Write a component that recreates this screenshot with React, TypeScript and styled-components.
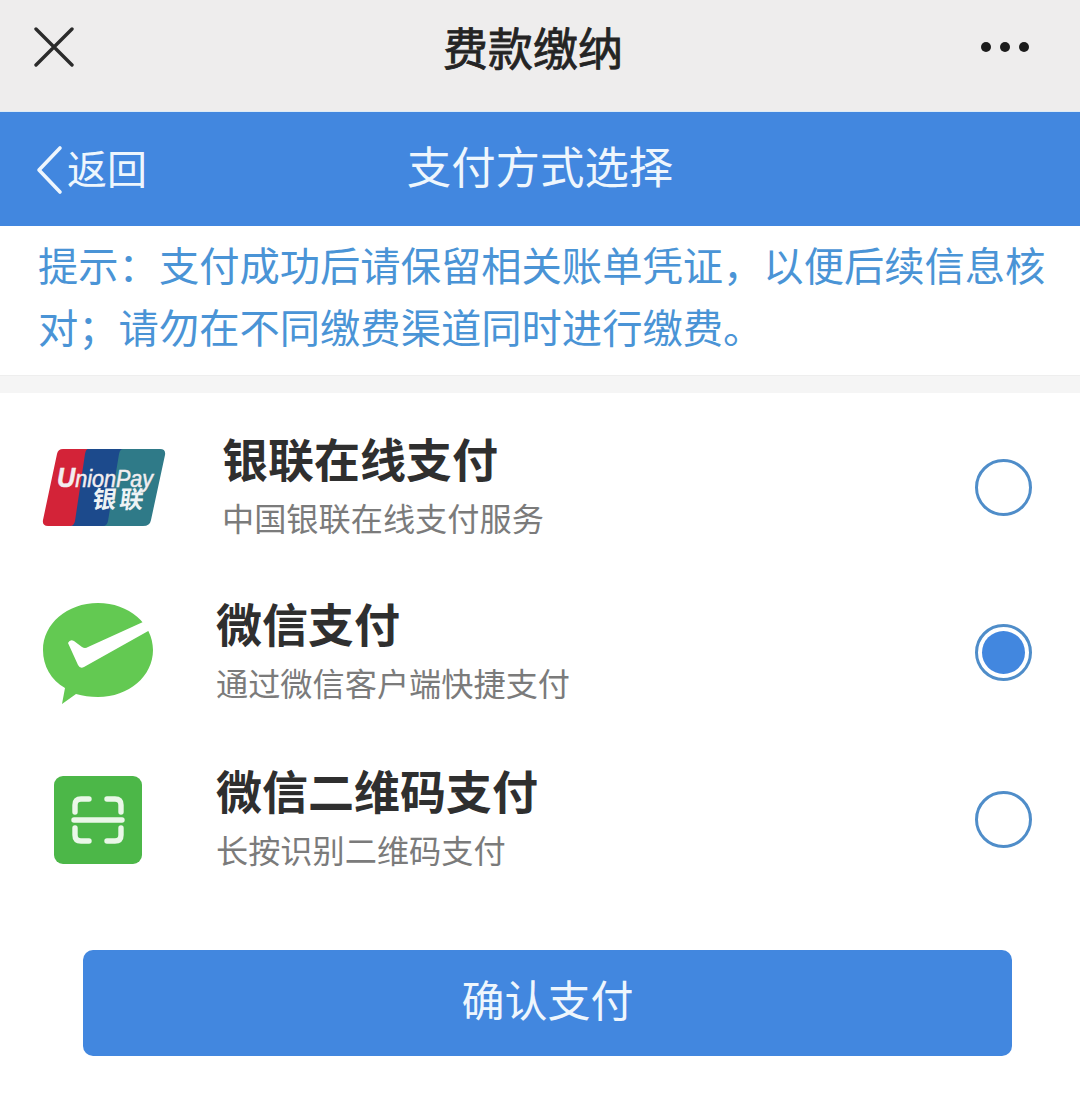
import React from 'react';
import { createGlobalStyle, styled } from 'styled-components';

const BLUE = '#4287df';

const GlobalStyle = createGlobalStyle`
  html, body {
    margin: 0;
    padding: 0;
    background: #fff;
    font-family: "Liberation Sans", "Noto Sans CJK SC", sans-serif;
  }
`;

interface IPayMethod {
  id: string;
  title: string;
  desc: string;
  icon: React.ReactNode;
  iconLeft: number;
  iconTop: number;
  textLeft: number;
  height: number;
  selected?: boolean;
}

function UnionPayLogo() {
  return (
    <svg width="124" height="80" viewBox="0 0 124 80">
      <path d="M21 1H50Q48 1 47 6L34 73Q33 78 29 78H6Q0 78 1 72L15 6Q16 1 21 1Z" fill="#d32338" />
      <path d="M46 1H84L66 78H28Q32 78 33 73L43 6Q44 1 46 1Z" fill="#1c4a8c" />
      <path d="M81 1H118Q124 1 123 7L109 72Q108 78 101 78H61Q65 78 66 73L77 6Q78 1 81 1Z" fill="#2f7a88" />
      <text x="15" y="39" fill="#f3eef0" stroke="#f3eef0" strokeWidth="0.5" fontFamily="'Liberation Sans'" fontStyle="italic" fontSize="23" textLength="96" lengthAdjust="spacingAndGlyphs">
        <tspan fontWeight="700" fontSize="27">U</tspan>nionPay
      </text>
      <text x="50" y="60" fill="#eef3f5" fontFamily="'Noto Sans CJK SC'" fontWeight="700" fontSize="24" textLength="51" transform="skewX(-8) translate(8 0)">
        银联
      </text>
    </svg>
  );
}

function WeChatPayLogo() {
  return (
    <svg width="112" height="102" viewBox="0 0 112 102">
      <path d="M56 1C87 1 111 22 111 48C111 74 87 95 56 95C48 95 41 94 34 92L20 102L23 86C9 78 1 64 1 48C1 22 25 1 56 1Z" fill="#63c952" />
      <path d="M26 41Q28 37 32 39L40 45Q43 47 46 45L101 20L108 28L42 65Q38 67 36 63Z" fill="#fff" />
    </svg>
  );
}

function ScanLogo() {
  return (
    <svg width="90" height="90" viewBox="0 0 90 90">
      <rect x="1" y="1" width="88" height="88" rx="9" fill="#4cb748" />
      <g fill="none" stroke="#eaf7e8" strokeWidth="5.4" strokeLinecap="round" strokeLinejoin="round">
        <path d="M22 37V30Q22 24 28 24H36" />
        <path d="M54 24H62Q68 24 68 30V37" />
        <path d="M22 53V60Q22 66 28 66H36" />
        <path d="M54 66H62Q68 66 68 60V53" />
        <path d="M21 45H69" />
      </g>
    </svg>
  );
}

const methods: IPayMethod[] = [
  { id: 'union', title: '银联在线支付', desc: '中国银联在线支付服务', icon: <UnionPayLogo />, iconLeft: 42, iconTop: 2, textLeft: 222, height: 164 },
  { id: 'wechat', title: '微信支付', desc: '通过微信客户端快捷支付', icon: <WeChatPayLogo />, iconLeft: 42, iconTop: 2, textLeft: 216, height: 166, selected: true },
  { id: 'qrcode', title: '微信二维码支付', desc: '长按识别二维码支付', icon: <ScanLogo />, iconLeft: 53, iconTop: 2, textLeft: 216, height: 168 },
];

export default function App() {
  return (
    <>
      <GlobalStyle />
      <Page>
        <WechatBar>
          <CloseButton>
            <svg width="40" height="40" viewBox="0 0 40 40">
              <path d="M2 2L38 38M38 2L2 38" stroke="#2b2b2b" strokeWidth="3.4" strokeLinecap="round" />
            </svg>
          </CloseButton>
          <WechatTitle>费款缴纳</WechatTitle>
          <MoreDots>
            <Dot />
            <Dot />
            <Dot />
          </MoreDots>
        </WechatBar>

        <PageHeader>
          <BackLink>
            <svg width="28" height="50" viewBox="0 0 28 50">
              <path d="M24 3L3 25L24 47" fill="none" stroke="#eef6fd" strokeWidth="3.6" strokeLinecap="round" strokeLinejoin="round" />
            </svg>
            <BackText>返回</BackText>
          </BackLink>
          <PageTitle>支付方式选择</PageTitle>
        </PageHeader>

        <Notice>提示：支付成功后请保留相关账单凭证，以便后续信息核对；请勿在不同缴费渠道同时进行缴费。</Notice>
        <Divider />

        <MethodList>
          {methods.map((method) => (
            <MethodRow key={method.id} $textLeft={method.textLeft} $height={method.height}>
              <IconSlot $left={method.iconLeft} $top={method.iconTop}>
                {method.icon}
              </IconSlot>
              <MethodText>
                <MethodTitle>{method.title}</MethodTitle>
                <MethodDesc>{method.desc}</MethodDesc>
              </MethodText>
              <Radio $selected={!!method.selected} />
            </MethodRow>
          ))}
        </MethodList>

        <ConfirmButton>确认支付</ConfirmButton>
      </Page>
    </>
  );
}

const Page = styled.div`
  width: 1080px;
  height: 1100px;
  overflow: hidden;
  background: #fff;
`;

const WechatBar = styled.div`
  height: 111px;
  background: #eeeded;
  border-bottom: 1px solid #dcebf6;
  display: flex;
  align-items: flex-start;
  justify-content: space-between;
  padding: 0 51px 0 34px;
`;

const CloseButton = styled.div`
  width: 40px;
  height: 40px;
  margin-top: 27px;
`;

const WechatTitle = styled.div`
  font-size: 45px;
  line-height: 50px;
  margin-top: 26px;
  margin-left: 11px;
  font-weight: 400;
  color: #242424;
  -webkit-text-stroke: 0.8px #242424;
`;

const MoreDots = styled.div`
  display: flex;
  gap: 9px;
  margin-top: 42px;
`;

const Dot = styled.span`
  width: 10px;
  height: 10px;
  border-radius: 50%;
  background: #1c1c1c;
`;

const PageHeader = styled.div`
  height: 114px;
  background: ${BLUE};
  position: relative;
  display: flex;
  align-items: center;
  justify-content: center;
`;

const BackLink = styled.div`
  position: absolute;
  left: 36px;
  top: 32px;
  display: flex;
  align-items: center;
  gap: 3px;
`;

const BackText = styled.span`
  font-size: 40px;
  line-height: 50px;
  margin-top: 1px;
  color: #eef6fd;
`;

const PageTitle = styled.div`
  font-size: 44.4px;
  line-height: 50px;
  color: #eef6fd;
`;

const Notice = styled.div`
  height: 149px;
  box-sizing: border-box;
  padding: 11px 30px 0 38px;
  font-size: 40.3px;
  line-height: 62px;
  color: #4a94d6;
`;

const Divider = styled.div`
  height: 17px;
  background: #f5f5f5;
  border-top: 1px solid #eeeeee;
`;

const MethodList = styled.div`
  padding-top: 12px;
`;

const MethodRow = styled.div<{ $textLeft: number; $height: number }>`
  height: ${({ $height }) => $height}px;
  display: grid;
  grid-template-columns: ${({ $textLeft }) => $textLeft}px 1fr 57px;
  align-items: center;
  padding-right: 48px;
`;

const IconSlot = styled.div<{ $left: number; $top: number }>`
  display: flex;
  padding-left: ${({ $left }) => $left}px;
  padding-top: ${({ $top }) => $top}px;
`;

const MethodText = styled.div`
  display: flex;
  flex-direction: column;
`;

const MethodTitle = styled.div`
  font-size: 46px;
  line-height: 56px;
  font-weight: 700;
  color: #2f2f2f;
`;

const MethodDesc = styled.div`
  font-size: 32.2px;
  line-height: 44px;
  margin-top: 9px;
  color: #7b7b7b;
`;

const Radio = styled.div<{ $selected: boolean }>`
  width: 57px;
  height: 57px;
  box-sizing: border-box;
  border-radius: 50%;
  border: 3px solid #4f8dc9;
  padding: 4px;
  &::after {
    content: '';
    display: ${({ $selected }) => ($selected ? 'block' : 'none')};
    width: 100%;
    height: 100%;
    border-radius: 50%;
    background: ${BLUE};
  }
`;

const ConfirmButton = styled.div`
  width: 929px;
  height: 106px;
  box-sizing: border-box;
  padding-bottom: 10px;
  margin: 47px 0 0 83px;
  border-radius: 10px;
  background: ${BLUE};
  color: #eef6fd;
  font-size: 43px;
  display: flex;
  align-items: center;
  justify-content: center;
`;
